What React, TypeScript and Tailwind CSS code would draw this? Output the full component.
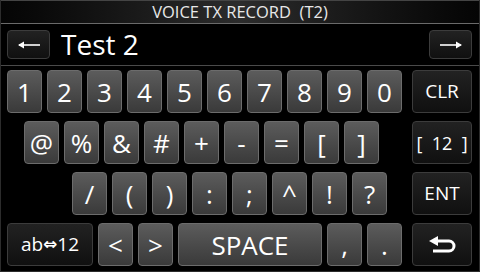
import type { ReactNode } from 'react';

const FONT = { fontFamily: '"Open Sans", "Noto Sans", sans-serif' };

// 数字・記号キー（明るいグレー）
function Key({ children, className = 'w-[35px] text-[26px]' }: { children: ReactNode; className?: string }) {
  return (
    <div
      className={`h-[43px] flex items-center justify-center rounded-[4px] border border-[#6c6c6c] bg-gradient-to-b from-[#5c5c5c] to-[#3a3a3a] text-white leading-none ${className}`}
    >
      {children}
    </div>
  );
}

// 機能キー（黒っぽい）
function FnKey({ children, className = 'w-[60px] h-[43px] text-[19px]' }: { children: ReactNode; className?: string }) {
  return (
    <div
      className={`flex items-center justify-center rounded-[4px] border border-[#3c3c3c] bg-gradient-to-b from-[#222222] to-[#101010] text-white leading-none ${className}`}
    >
      {children}
    </div>
  );
}

function Arrow({ dir }: { dir: 'left' | 'right' }) {
  return (
    <svg width="24" height="10" viewBox="0 0 24 10" className={dir === 'right' ? 'rotate-180' : ''}>
      <path d="M2 5H23" stroke="white" strokeWidth="1.6" />
      <path d="M1 5L7 1.5V8.5Z" fill="white" />
    </svg>
  );
}

function BackIcon() {
  return (
    <svg width="27" height="18" viewBox="0 0 27 18">
      <path d="M8 5H20a5 5 0 0 1 0 10H4" fill="none" stroke="white" strokeWidth="3" />
      <path d="M0 5L9 0V10Z" fill="white" />
    </svg>
  );
}

export default function App() {
  const row1 = ['1', '2', '3', '4', '5', '6', '7', '8', '9', '0'];
  const row2 = ['@', '%', '&', '#', '+', '-', '=', '[', ']'];
  const row3 = ['/', '(', ')', ':', ';', '^', '!', '?'];

  return (
    <div className="w-[480px] h-[272px] bg-black flex flex-col overflow-hidden border-x border-b border-[#2c2c2c]" style={FONT}>
      {/* タイトルバー */}
      <div className="h-[24px] shrink-0 flex items-center justify-center border-b border-[#6a6a6a] border-t border-t-[#444] bg-gradient-to-r from-[#050505] via-[#2c2c2c] to-[#050505] text-[#e8e8e8] text-[16.5px] leading-none whitespace-pre">
        VOICE TX RECORD  (T2)
      </div>

      {/* 入力行 */}
      <div className="h-[42px] shrink-0 flex items-center pl-[6px] pr-[7px] border-b border-[#4a4a4a]">
        <FnKey className="w-[43px] h-[29px]">
          <Arrow dir="left" />
        </FnKey>
        <div className="ml-[11px] flex-1 text-white text-[28px] leading-none -mt-[1px]">Test 2</div>
        <FnKey className="w-[43px] h-[29px]">
          <Arrow dir="right" />
        </FnKey>
      </div>

      {/* キーボード */}
      <div className="flex flex-col gap-[8px] pt-[4px] pr-[7px]">
        <div className="flex items-center">
          <div className="flex gap-[5px] pl-[6px]">
            {row1.map(k => (
              <Key key={k}>{k}</Key>
            ))}
          </div>
          <div className="ml-auto">
            <FnKey>CLR</FnKey>
          </div>
        </div>

        <div className="flex items-center">
          <div className="flex gap-[5px] pl-[23px]">
            {row2.map(k => (
              <Key key={k}>{k}</Key>
            ))}
          </div>
          <div className="ml-auto">
            <FnKey className="w-[60px] h-[43px] text-[18px]">
              <span className="whitespace-pre">[  12  ]</span>
            </FnKey>
          </div>
        </div>

        <div className="flex items-center">
          <div className="flex gap-[5px] pl-[71px]">
            {row3.map(k => (
              <Key key={k}>{k}</Key>
            ))}
          </div>
          <div className="ml-auto">
            <FnKey>ENT</FnKey>
          </div>
        </div>

        <div className="flex items-center">
          <div className="flex gap-[5px] pl-[6px]">
            <FnKey className="w-[86px] h-[43px] text-[19px]">
              <span>ab</span>
              <span className="text-[17px] font-bold" style={{ fontFamily: '"DejaVu Sans", sans-serif' }}>⇔</span>
              <span>12</span>
            </FnKey>
            <Key>&lt;</Key>
            <Key>&gt;</Key>
            <Key className="w-[144px] text-[26px]">SPACE</Key>
            <Key>,</Key>
            <Key>.</Key>
          </div>
          <div className="ml-auto">
            <FnKey>
              <BackIcon />
            </FnKey>
          </div>
        </div>
      </div>
    </div>
  );
}
